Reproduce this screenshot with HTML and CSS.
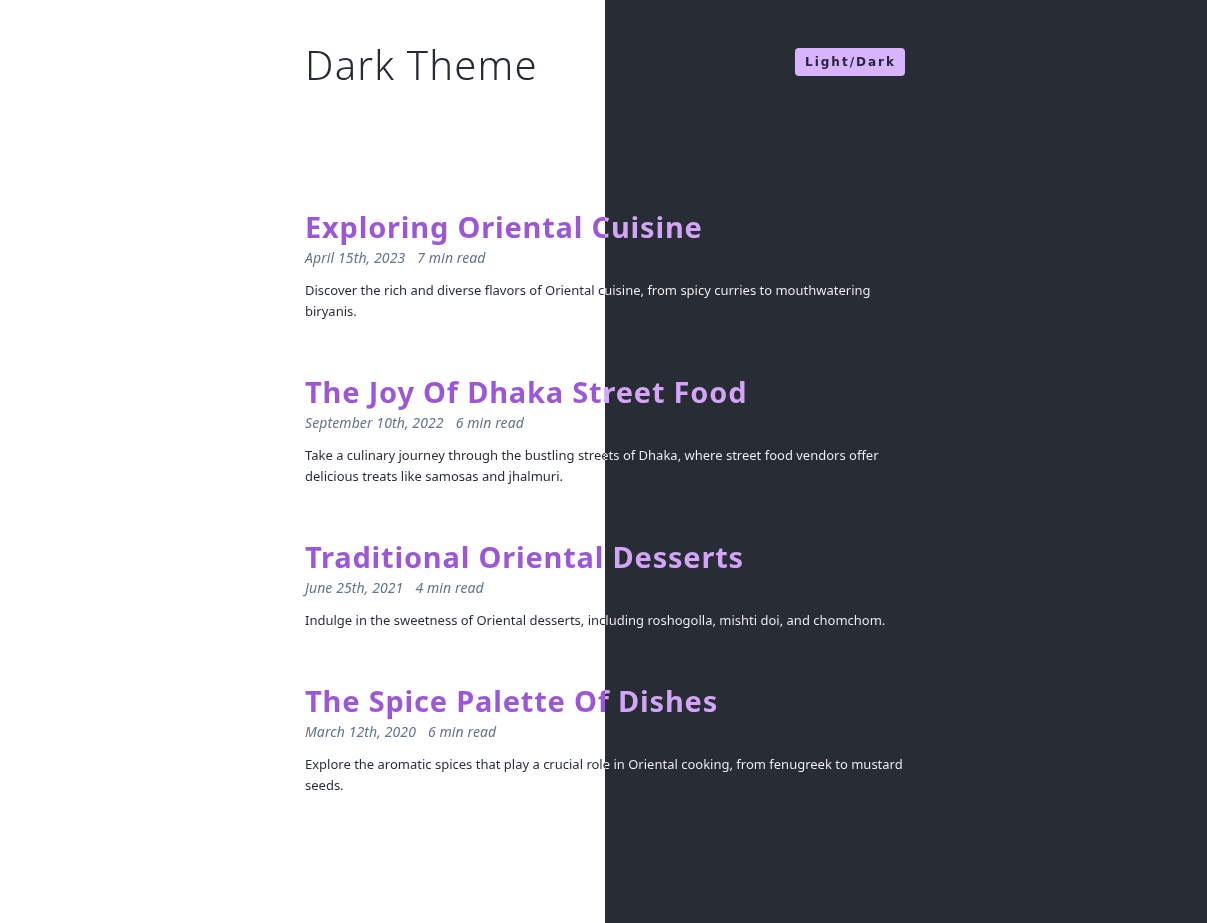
FILE: index.html
```html
<!DOCTYPE html>
<html lang="en">
<head>
<meta charset="utf-8">
<title>Dark Theme</title>
<link rel="stylesheet" href="styles.css">
</head>
<body>
<div class="split"></div>
<main class="page">
  <header class="top">
    <h1 class="site-title">Dark Theme</h1>
    <button class="toggle">Light/Dark</button>
  </header>
  <section class="posts">
    <article class="post">
      <h2 class="post-title">Exploring Oriental Cuisine</h2>
      <p class="meta"><span>April 15th, 2023</span><span>7 min read</span></p>
      <p class="excerpt">Discover the rich and diverse flavors of Oriental cuisine, from spicy curries to mouthwatering biryanis.</p>
    </article>
    <article class="post">
      <h2 class="post-title">The Joy Of Dhaka Street Food</h2>
      <p class="meta"><span>September 10th, 2022</span><span>6 min read</span></p>
      <p class="excerpt">Take a culinary journey through the bustling streets of Dhaka, where street food vendors offer delicious treats like samosas and jhalmuri.</p>
    </article>
    <article class="post">
      <h2 class="post-title">Traditional Oriental Desserts</h2>
      <p class="meta"><span>June 25th, 2021</span><span>4 min read</span></p>
      <p class="excerpt">Indulge in the sweetness of Oriental desserts, including roshogolla, mishti doi, and chomchom.</p>
    </article>
    <article class="post">
      <h2 class="post-title">The Spice Palette Of Dishes</h2>
      <p class="meta"><span>March 12th, 2020</span><span>6 min read</span></p>
      <p class="excerpt">Explore the aromatic spices that play a crucial role in Oriental cooking, from fenugreek to mustard seeds.</p>
    </article>
  </section>
</main>
</body>
</html>
```
FILE: styles.css
```css
html, body {
  margin: 0;
  padding: 0;
  height: 100%;
}
body {
  background: #ffffff;
  font-family: "Noto Sans", "Open Sans", sans-serif;
  overflow: hidden;
}
.split {
  position: fixed;
  top: 0;
  left: 605px;
  right: 0;
  bottom: 0;
  background: #282c35;
}
.page {
  position: relative;
  width: 600px;
  margin: 0 0 0 305px;
  padding-top: 38px;
}
.top {
  display: flex;
  justify-content: space-between;
  align-items: flex-start;
}
.site-title {
  margin: 0;
  font-family: "Noto Sans", sans-serif;
  font-weight: 300;
  font-size: 40px;
  line-height: 54px;
  letter-spacing: 1.2px;
  color: #262a33;
}
.toggle {
  margin-top: 10px;
  width: 110px;
  height: 28px;
  border: none;
  border-radius: 4px;
  background: #d8b4fe;
  color: #2a2238;
  font-family: "DejaVu Sans", sans-serif;
  font-weight: bold;
  font-size: 12px;
  letter-spacing: 2px;
  padding: 0 0 0 1px;
  cursor: pointer;
}
.posts {
  padding-top: 116px;
}
.post {
  margin-bottom: 51px;
}
.post-title {
  margin: 0;
  font-size: 29px;
  font-weight: 700;
  line-height: 38px;
  letter-spacing: 0.8px;
  background: linear-gradient(90deg, #9c57d6 300px, #d3a4f7 300px);
  -webkit-background-clip: text;
  background-clip: text;
  color: transparent;
}
.meta {
  margin: 1px 0 0;
  font-size: 14px;
  line-height: 22px;
  font-style: italic;
  letter-spacing: 0.1px;
  color: #64748b;
  display: flex;
  gap: 12px;
}
.excerpt {
  margin: 11px 0 0;
  font-size: 13px;
  line-height: 21px;
  background: linear-gradient(90deg, #262a33 300px, #f4f5f7 300px);
  -webkit-background-clip: text;
  background-clip: text;
  color: transparent;
}
```
